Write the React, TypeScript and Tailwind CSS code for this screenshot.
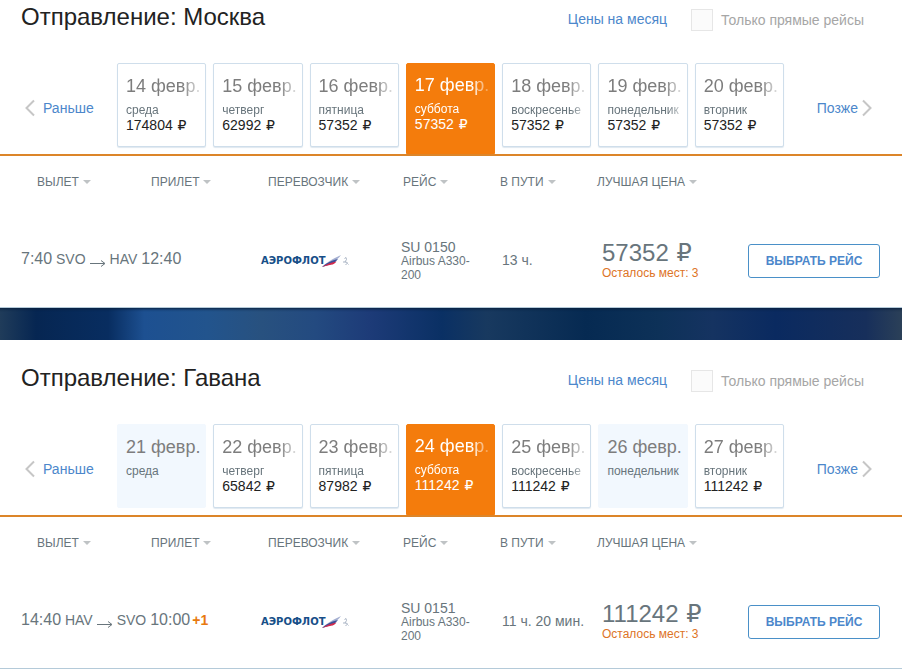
import clsx from "clsx";

type Day = {
  date: string;
  weekday: string;
  price?: number;
  active?: boolean;
};

type Flight = {
  city: string;
  days: Day[];
  from: string;
  departure: string;
  to: string;
  arrival: string;
  nextDay?: boolean;
  number: string;
  duration: string;
  price: number;
};

const flights: Flight[] = [
  {
    city: "Москва",
    days: [
      { date: "14 февр.", weekday: "среда", price: 174804 },
      { date: "15 февр.", weekday: "четверг", price: 62992 },
      { date: "16 февр.", weekday: "пятница", price: 57352 },
      { date: "17 февр.", weekday: "суббота", price: 57352, active: true },
      { date: "18 февр.", weekday: "воскресенье", price: 57352 },
      { date: "19 февр.", weekday: "понедельник", price: 57352 },
      { date: "20 февр.", weekday: "вторник", price: 57352 },
    ],
    from: "SVO",
    departure: "7:40",
    to: "HAV",
    arrival: "12:40",
    number: "SU 0150",
    duration: "13 ч.",
    price: 57352,
  },
  {
    city: "Гавана",
    days: [
      { date: "21 февр.", weekday: "среда" },
      { date: "22 февр.", weekday: "четверг", price: 65842 },
      { date: "23 февр.", weekday: "пятница", price: 87982 },
      { date: "24 февр.", weekday: "суббота", price: 111242, active: true },
      { date: "25 февр.", weekday: "воскресенье", price: 111242 },
      { date: "26 февр.", weekday: "понедельник" },
      { date: "27 февр.", weekday: "вторник", price: 111242 },
    ],
    from: "HAV",
    departure: "14:40",
    to: "SVO",
    arrival: "10:00",
    nextDay: true,
    number: "SU 0151",
    duration: "11 ч. 20 мин.",
    price: 111242,
  },
];

const columns = [
  { label: "Вылет", className: "w-[135px] pl-[37px]" },
  { label: "Прилет", className: "w-[117px] pl-4" },
  { label: "Перевозчик", className: "w-[135px] pl-4" },
  { label: "Рейс", className: "w-[97px] pl-4" },
  { label: "В пути", className: "w-[97px] pl-4" },
  { label: "Лучшая цена", className: "w-[144px] pl-4" },
];

function Chevron({ flip }: { flip?: boolean }) {
  return (
    <svg viewBox="0 0 10 18" fill="none" stroke="#c6c6c6" strokeWidth={2} className={clsx("h-[18px] w-[10px]", flip && "rotate-180")}>
      <path d="M9 1.5L1.5 9L9 16.5" />
    </svg>
  );
}

function AeroflotLogo() {
  return (
    <div className="flex items-center text-[#174f88]">
      <span className="font-['DejaVu_Sans',sans-serif] text-[10px] leading-4 font-bold">АЭРОФЛОТ</span>
      <svg viewBox="0 0 28 14" className="-ml-1 h-[14px] w-[28px]">
        <path d="M1 13C5 9 10 5.500 20 1C18 4 15.500 6 13 7.500Z" fill="#a3aed0" />
        <path d="M1 13C5 9.500 9 7 17 5C15 7.500 14 8 12 9.500Z" fill="#3c4f98" />
        <path d="M1 13C5 10.500 9 8.500 15.500 7.500C14 9.500 12.500 10.500 10 10.800C7 11.200 4 12 1 13Z" fill="#d3294b" />
        <path d="M23.500 4.500l1.500-1 .5 2-1.500 2.500 2.500.5M22 8h2M24.500 10.500l2-1 1 1" fill="none" stroke="#a9b4c4" strokeWidth={1} />
      </svg>
    </div>
  );
}

function Price({ value }: { value: number }) {
  return (
    <>
      {value} <span className="ml-px font-['DejaVu_Sans',sans-serif] leading-none">₽</span>
    </>
  );
}

function DayCard({ day }: { day: Day }) {
  return (
    <button
      className={clsx(
        "flex min-w-0 flex-col overflow-hidden rounded-xs border pt-2 pr-1 pl-2 text-left",
        day.active && "h-[91px] rounded-b-none border-[#f47c0c] bg-[#f47c0c] text-white",
        !day.active && "h-[84px]",
        !day.active && day.price && "border-[#cfdeeb] bg-white shadow-[0_1px_1px_#dfe8f0]",
        !day.active && !day.price && "border-[#f2f8fe] bg-[#f2f8fe]"
      )}
    >
      <span
        className={clsx(
          "w-full overflow-hidden text-[18px] leading-7 whitespace-nowrap",
          day.active ? "-mt-px" : "text-[#7d7d7d]",
          day.price && "mask-r-from-75% mask-r-to-105%"
        )}
      >
        {day.date}
      </span>
      <span
        className={clsx(
          "w-full overflow-hidden pt-[2px] text-[12px] leading-4 whitespace-nowrap",
          !day.active && "text-[#68757c]",
          day.price && "mask-r-from-80% mask-r-to-105%"
        )}
      >
        {day.weekday}
      </span>
      {day.price && (
        <span className={clsx("text-[14px] leading-[14px] whitespace-nowrap", !day.active && "text-[#222]")}>
          <Price value={day.price} />
        </span>
      )}
    </button>
  );
}

function FlightSection({ flight, first }: { flight: Flight; first?: boolean }) {
  return (
    <section className={clsx("border-b border-[#b4cad9] bg-white", !first && "pt-[21px]")}>
      <header className="flex h-[34px] items-center pr-[38px] pl-[21px]">
        <h2 className="flex-1 text-[24px] leading-8 text-[#222]">Отправление: {flight.city}</h2>
        <a href="#month" className="mt-1 text-[14px] leading-5 text-[#4c87cb]">Цены на месяц</a>
        <label className="mt-[6px] ml-6 flex items-center gap-2 text-[14px] leading-5 text-[#a6a6a6]">
          <input type="checkbox" className="size-[22px] appearance-none border border-[#e6e6e6] bg-[#fbfbfb]" />
          Только прямые рейсы
        </label>
      </header>

      <div className="mt-[29px] flex h-[93px] border-b-2 border-[#dc8529]">
        <button className="flex h-[90px] w-[117px] items-center gap-2 pl-[25px] text-[14px] text-[#4c87cb]">
          <Chevron />
          Раньше
        </button>
        <div className="grid min-w-0 flex-1 grid-cols-7 items-start gap-[7px]">
          {flight.days.map((day) => (
            <DayCard key={day.date} day={day} />
          ))}
        </div>
        <button className="flex h-[90px] w-[118px] items-center justify-end gap-1 pr-[30px] text-[14px] text-[#4c87cb]">
          Позже
          <Chevron flip />
        </button>
      </div>

      <table className="w-full table-fixed text-left text-[#68757c]">
        <thead>
          <tr className="h-[52px]">
            {columns.map((col) => (
              <th key={col.label} className={clsx("p-0 text-[12px] font-normal whitespace-nowrap uppercase", col.className)}>
                <button className="flex items-center gap-1 uppercase">
                  {col.label}
                  <svg viewBox="0 0 8 4" className="h-1 w-2" fill="#bfc3c5">
                    <path d="M0 0h8L4 4z" />
                  </svg>
                </button>
              </th>
            ))}
            <th />
          </tr>
        </thead>
        <tbody>
          <tr className="h-[99px]">
            <td colSpan={2} className="pt-[2px] pl-[21px]">
              <div className="flex items-baseline gap-1 text-[14px] leading-5">
                <span>
                  <span className="text-[16px]">{flight.departure}</span> {flight.from}
                </span>
                <svg viewBox="0 0 16 8" className="relative top-1 h-2 w-4" fill="none" stroke="#68757c">
                  <path d="M0 3.500h14.500M11 .5l4 3-4 3" />
                </svg>
                <span>
                  {flight.to} <span className="text-[16px]">{flight.arrival}</span>
                  {flight.nextDay && <b className="pl-[2px] text-[#e8790f]">+1</b>}
                </span>
              </div>
            </td>
            <td className="pt-[6px] pl-[9px]">
              <AeroflotLogo />
            </td>
            <td className="pt-[6px] pr-2 pl-[14px] text-[12px] leading-[14px]">
              <div className="text-[14px]">{flight.number}</div>
              Airbus A330-200
            </td>
            <td className="pt-[6px] pl-[18px] text-[14px] whitespace-nowrap">{flight.duration}</td>
            <td className="pt-[6px] pl-[21px] whitespace-nowrap">
              <div className="text-[24px] leading-6">
                <Price value={flight.price} />
              </div>
              <div className="text-[12px] leading-4 text-[#dd7426]">Осталось мест: 3</div>
            </td>
            <td className="pt-[6px] pr-[22px] pl-[23px]">
              <button className="h-[34px] w-full rounded-[3px] border border-[#4a90c8] text-[12px] font-bold whitespace-nowrap text-[#4c87cb] uppercase">
                Выбрать рейс
              </button>
            </td>
          </tr>
        </tbody>
      </table>
    </section>
  );
}

export default function App() {
  return (
    <main className="bg-white font-['Liberation_Sans',Arial,sans-serif]">
      <FlightSection flight={flights[0]} first />
      <div className="h-8 bg-[linear-gradient(90deg,#203c5a_0%,#062652_4%,#082d60_12%,#1d5091_16%,#22548d_23%,#28517f_29%,#234a80_35%,#1d3b78_41%,#0a3064_49%,#18395f_54%,#062a52_65%,#0d3158_73%,#153361_79%,#0a2a60_86%,#172f5b_96%,#2b4058_100%)] shadow-[inset_0_4px_3px_-3px_#0a1f3c]" />
      <FlightSection flight={flights[1]} />
    </main>
  );
}
